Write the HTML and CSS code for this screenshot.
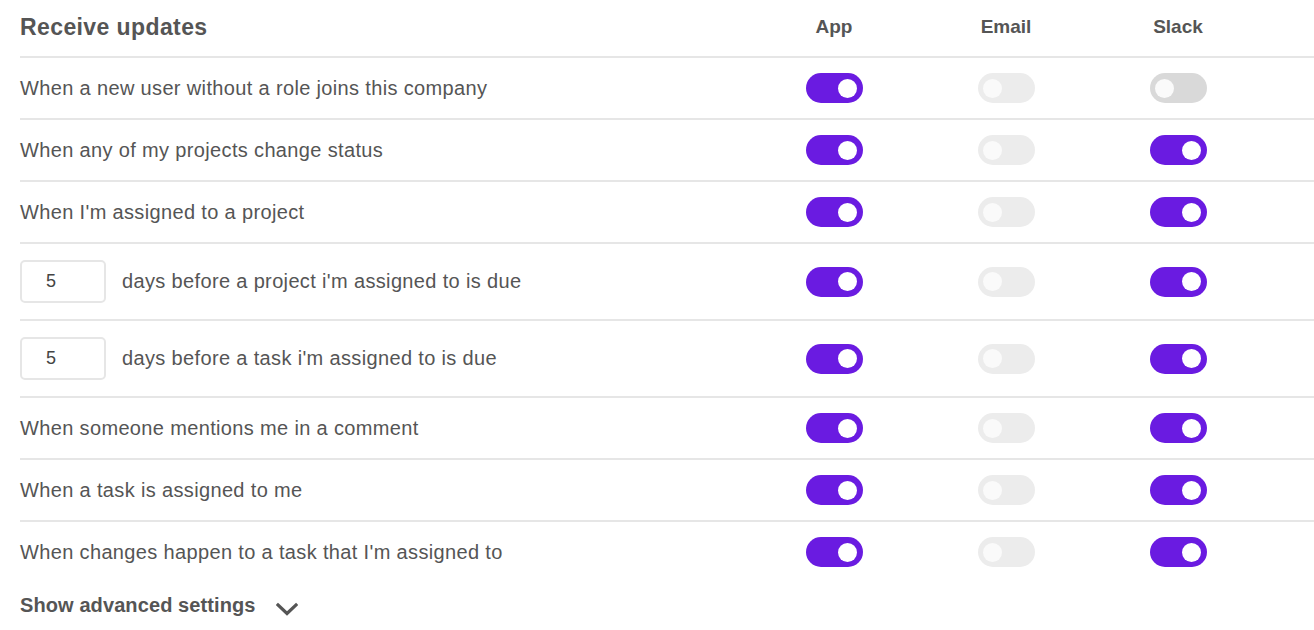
FILE: index.html
```html
<!DOCTYPE html>
<html>
<head>
<meta charset="utf-8">
<link rel="stylesheet" href="styles.css">
</head>
<body>
<div class="panel">
  <div class="row head">
    <div class="title">Receive updates</div>
    <div class="col-label">App</div>
    <div class="col-label">Email</div>
    <div class="col-label">Slack</div>
  </div>

  <div class="row">
    <div class="label">When a new user without a role joins this company</div>
    <div class="cell"><span class="toggle on"></span></div>
    <div class="cell"><span class="toggle"></span></div>
    <div class="cell"><span class="toggle dim"></span></div>
  </div>

  <div class="row">
    <div class="label">When any of my projects change status</div>
    <div class="cell"><span class="toggle on"></span></div>
    <div class="cell"><span class="toggle"></span></div>
    <div class="cell"><span class="toggle on"></span></div>
  </div>

  <div class="row">
    <div class="label">When I'm assigned to a project</div>
    <div class="cell"><span class="toggle on"></span></div>
    <div class="cell"><span class="toggle"></span></div>
    <div class="cell"><span class="toggle on"></span></div>
  </div>

  <div class="row tall">
    <div class="label"><span class="num">5</span><span>days before a project i'm assigned to is due</span></div>
    <div class="cell"><span class="toggle on"></span></div>
    <div class="cell"><span class="toggle"></span></div>
    <div class="cell"><span class="toggle on"></span></div>
  </div>

  <div class="row tall">
    <div class="label"><span class="num">5</span><span>days before a task i'm assigned to is due</span></div>
    <div class="cell"><span class="toggle on"></span></div>
    <div class="cell"><span class="toggle"></span></div>
    <div class="cell"><span class="toggle on"></span></div>
  </div>

  <div class="row">
    <div class="label">When someone mentions me in a comment</div>
    <div class="cell"><span class="toggle on"></span></div>
    <div class="cell"><span class="toggle"></span></div>
    <div class="cell"><span class="toggle on"></span></div>
  </div>

  <div class="row">
    <div class="label">When a task is assigned to me</div>
    <div class="cell"><span class="toggle on"></span></div>
    <div class="cell"><span class="toggle"></span></div>
    <div class="cell"><span class="toggle on"></span></div>
  </div>

  <div class="row last">
    <div class="label">When changes happen to a task that I'm assigned to</div>
    <div class="cell"><span class="toggle on"></span></div>
    <div class="cell"><span class="toggle"></span></div>
    <div class="cell"><span class="toggle on"></span></div>
  </div>

  <div class="advanced">
    <span>Show advanced settings</span>
    <svg class="chev" width="22" height="14" viewBox="0 0 22 14"><polyline points="2,3 11,11.5 20,3" fill="none" stroke="#555" stroke-width="3.2" stroke-linecap="square"/></svg>
  </div>
</div>
</body>
</html>
```

FILE: styles.css
```css
html, body {
  margin: 0;
  padding: 0;
  background: #fff;
}
body {
  font-family: "Liberation Sans", Arial, sans-serif;
  color: #555;
}
.panel {
  margin-left: 20px;
}
.row {
  display: grid;
  grid-template-columns: 1fr 172px 172px 172px;
  padding-right: 50px;
  align-items: center;
  height: 60px;
  border-bottom: 2px solid #e6e6e6;
}
.row.head {
  height: 56px;
}
.row.tall {
  height: 75px;
}
.row.last {
  border-bottom: none;
}
.title {
  font-size: 23px;
  letter-spacing: 0.4px;
  font-weight: bold;
  color: #555;
  padding-bottom: 2px;
}
.col-label {
  text-align: center;
  font-size: 19px;
  font-weight: bold;
  color: #555;
  padding-bottom: 2px;
}
.label {
  font-size: 20px;
  letter-spacing: 0.35px;
  color: #555;
  display: flex;
  align-items: center;
  gap: 16px;
}
.num {
  box-sizing: border-box;
  width: 86px;
  height: 43px;
  border: 2px solid #e6e6e6;
  border-radius: 5px;
  padding-left: 24px;
  display: flex;
  align-items: center;
  font-size: 18px;
  letter-spacing: 0;
  color: #444;
}
.cell {
  display: flex;
  justify-content: center;
}
.toggle {
  position: relative;
  display: block;
  width: 57px;
  height: 30px;
  border-radius: 15px;
  background: #ececec;
}
.toggle::after {
  content: "";
  position: absolute;
  top: 5.5px;
  left: 5.5px;
  width: 19px;
  height: 19px;
  border-radius: 50%;
  background: #fafafa;
}
.toggle.on {
  background: #6a1be1;
}
.toggle.on::after {
  left: auto;
  right: 5.5px;
  background: #fff;
}
.toggle.dim {
  background: #d9d9d9;
}
.advanced {
  display: flex;
  align-items: center;
  gap: 20px;
  margin-top: 12px;
  font-size: 20px;
  letter-spacing: 0.1px;
  font-weight: bold;
  color: #555;
}
.chev {
  margin-top: 6px;
}
```
